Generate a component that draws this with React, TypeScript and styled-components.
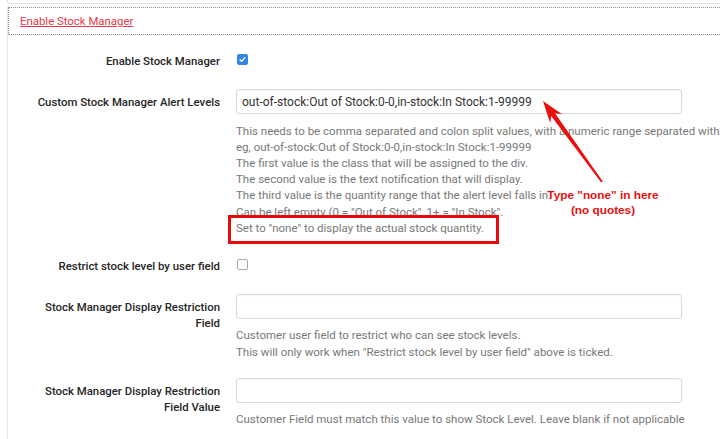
import React from 'react';
import styled, { createGlobalStyle } from 'styled-components';

const GlobalStyle = createGlobalStyle`
  html, body {
    margin: 0;
    padding: 0;
    background: #fff;
  }
  body {
    font-family: Roboto, 'Liberation Sans', Arial, sans-serif;
    color: #333;
  }
`;

const Page = styled.div`
  position: relative;
  width: 720px;
  height: 439px;
  overflow: hidden;
  padding-left: 7px;
  box-sizing: border-box;
`;

const PrevPanel = styled.div`
  height: 3px;
  border-left: 1px solid #e2e2e2;
  border-bottom: 1px solid #e2e2e2;
  border-bottom-left-radius: 3px;
`;

const Panel = styled.section`
  margin-top: 3px;
  border-left: 1px solid #e6e6e6;
  min-height: 440px;
`;

const PanelHeader = styled.div`
  height: 26px;
  display: flex;
  align-items: center;
  padding-left: 11px;
  border: 1px dotted #8c8c8c;
  border-right: none;
`;

const HeaderLink = styled.a`
  font-size: 11.4px;
  color: #e8394a;
  text-decoration: underline;
  cursor: pointer;
`;

const Form = styled.div`
  display: flex;
  flex-direction: column;
  gap: 18px;
  padding-top: 14px;
`;

const Row = styled.div<{ $check?: boolean }>`
  display: grid;
  grid-template-columns: 195px 446px;
  column-gap: 16px;
  padding-left: 17px;
  min-height: ${({ $check }) => ($check ? '22px' : 'auto')};
  align-items: start;
`;

const Label = styled.label<{ $check?: boolean }>`
  text-align: right;
  font-size: 11.4px;
  font-weight: 500;
  line-height: 16px;
  color: #262626;
  padding-top: ${({ $check }) => ($check ? '4px' : '5px')};
`;

const Field = styled.div`
  display: flex;
  flex-direction: column;
  min-width: 0;
`;

const TextInput = styled.div`
  height: 25px;
  box-sizing: border-box;
  border: 1px solid #d9d9d9;
  border-radius: 3px;
  box-shadow: inset 0 1px 1px rgba(0, 0, 0, 0.04);
  padding: 0 5px;
  display: flex;
  align-items: center;
  font-size: 12px;
  color: #333;
  white-space: nowrap;
`;

const Help = styled.div`
  margin-top: 8.5px;
  font-size: 11.5px;
  line-height: 16.2px;
  color: #787878;
  white-space: nowrap;
`;

const Boxed = styled.span`
  position: relative;
  display: inline-block;

  &::after {
    content: '';
    position: absolute;
    top: -5px;
    bottom: -8px;
    left: -8px;
    right: -15px;
    border: 3px solid #e50b0b;
  }
`;

const CheckBox = styled.span<{ $checked?: boolean }>`
  width: 11px;
  height: 11px;
  margin-top: 5px;
  margin-left: 1px;
  box-sizing: border-box;
  border-radius: 2px;
  border: 1px solid ${({ $checked }) => ($checked ? '#2f86e6' : '#a8a8a8')};
  background: ${({ $checked }) => ($checked ? '#2f86e6' : '#fff')};
  display: flex;
  align-items: center;
  justify-content: center;
`;

const Note = styled.div`
  position: absolute;
  left: 546px;
  top: 188px;
  width: 114px;
  text-align: center;
  font-family: 'Liberation Sans', Arial, sans-serif;
  font-weight: bold;
  font-size: 11.8px;
  line-height: 15px;
  color: #e8100f;
  text-shadow: 0 0 2px #fff, 0 0 2px #fff;
`;

const ArrowSvg = styled.svg`
  position: absolute;
  left: 0;
  top: 0;
  pointer-events: none;
`;

const Check = ({ checked }: { checked?: boolean }) => (
  <CheckBox $checked={checked}>
    {checked && (
      <svg width="7" height="7" viewBox="0 0 8 8">
        <path d="M1.2 4.2 L3.2 6 L6.8 1.8" fill="none" stroke="#fff" strokeWidth="1.5" strokeLinecap="round" strokeLinejoin="round" />
      </svg>
    )}
  </CheckBox>
);

const Arrow = () => (
  <ArrowSvg width="720" height="439" viewBox="0 0 720 439">
    <polygon
      points="543,101 562.1,114.2 555.0,113.3 602.8,181.6 601.2,182.6 551.2,116.1 550.2,123.2"
      fill="#e8100f"
    />
  </ArrowSvg>
);

export default function App() {
  return (
    <Page>
      <GlobalStyle />
      <PrevPanel />
      <Panel>
        <PanelHeader>
          <HeaderLink>Enable Stock Manager</HeaderLink>
        </PanelHeader>
        <Form>
          <Row $check>
            <Label $check>Enable Stock Manager</Label>
            <Check checked />
          </Row>
          <Row>
            <Label>Custom Stock Manager Alert Levels</Label>
            <Field>
              <TextInput>out-of-stock:Out of Stock:0-0,in-stock:In Stock:1-99999</TextInput>
              <Help>
                This needs to be comma separated and colon split values, with a numeric range separated with a
                <br />
                eg, out-of-stock:Out of Stock:0-0,in-stock:In Stock:1-99999
                <br />
                The first value is the class that will be assigned to the div.
                <br />
                The second value is the text notification that will display.
                <br />
                The third value is the quantity range that the alert level falls in.
                <br />
                Can be left empty (0 = "Out of Stock", 1+ = "In Stock".
                <br />
                <Boxed>Set to "none" to display the actual stock quantity.</Boxed>
              </Help>
            </Field>
          </Row>
          <Row $check>
            <Label $check>Restrict stock level by user field</Label>
            <Check />
          </Row>
          <Row>
            <Label>Stock Manager Display Restriction Field</Label>
            <Field>
              <TextInput />
              <Help>
                Customer user field to restrict who can see stock levels.
                <br />
                This will only work when "Restrict stock level by user field" above is ticked.
              </Help>
            </Field>
          </Row>
          <Row>
            <Label>Stock Manager Display Restriction Field Value</Label>
            <Field>
              <TextInput />
              <Help>Customer Field must match this value to show Stock Level. Leave blank if not applicable</Help>
            </Field>
          </Row>
        </Form>
      </Panel>
      <Arrow />
      <Note>
        Type "none" in here
        <br />
        (no quotes)
      </Note>
    </Page>
  );
}
